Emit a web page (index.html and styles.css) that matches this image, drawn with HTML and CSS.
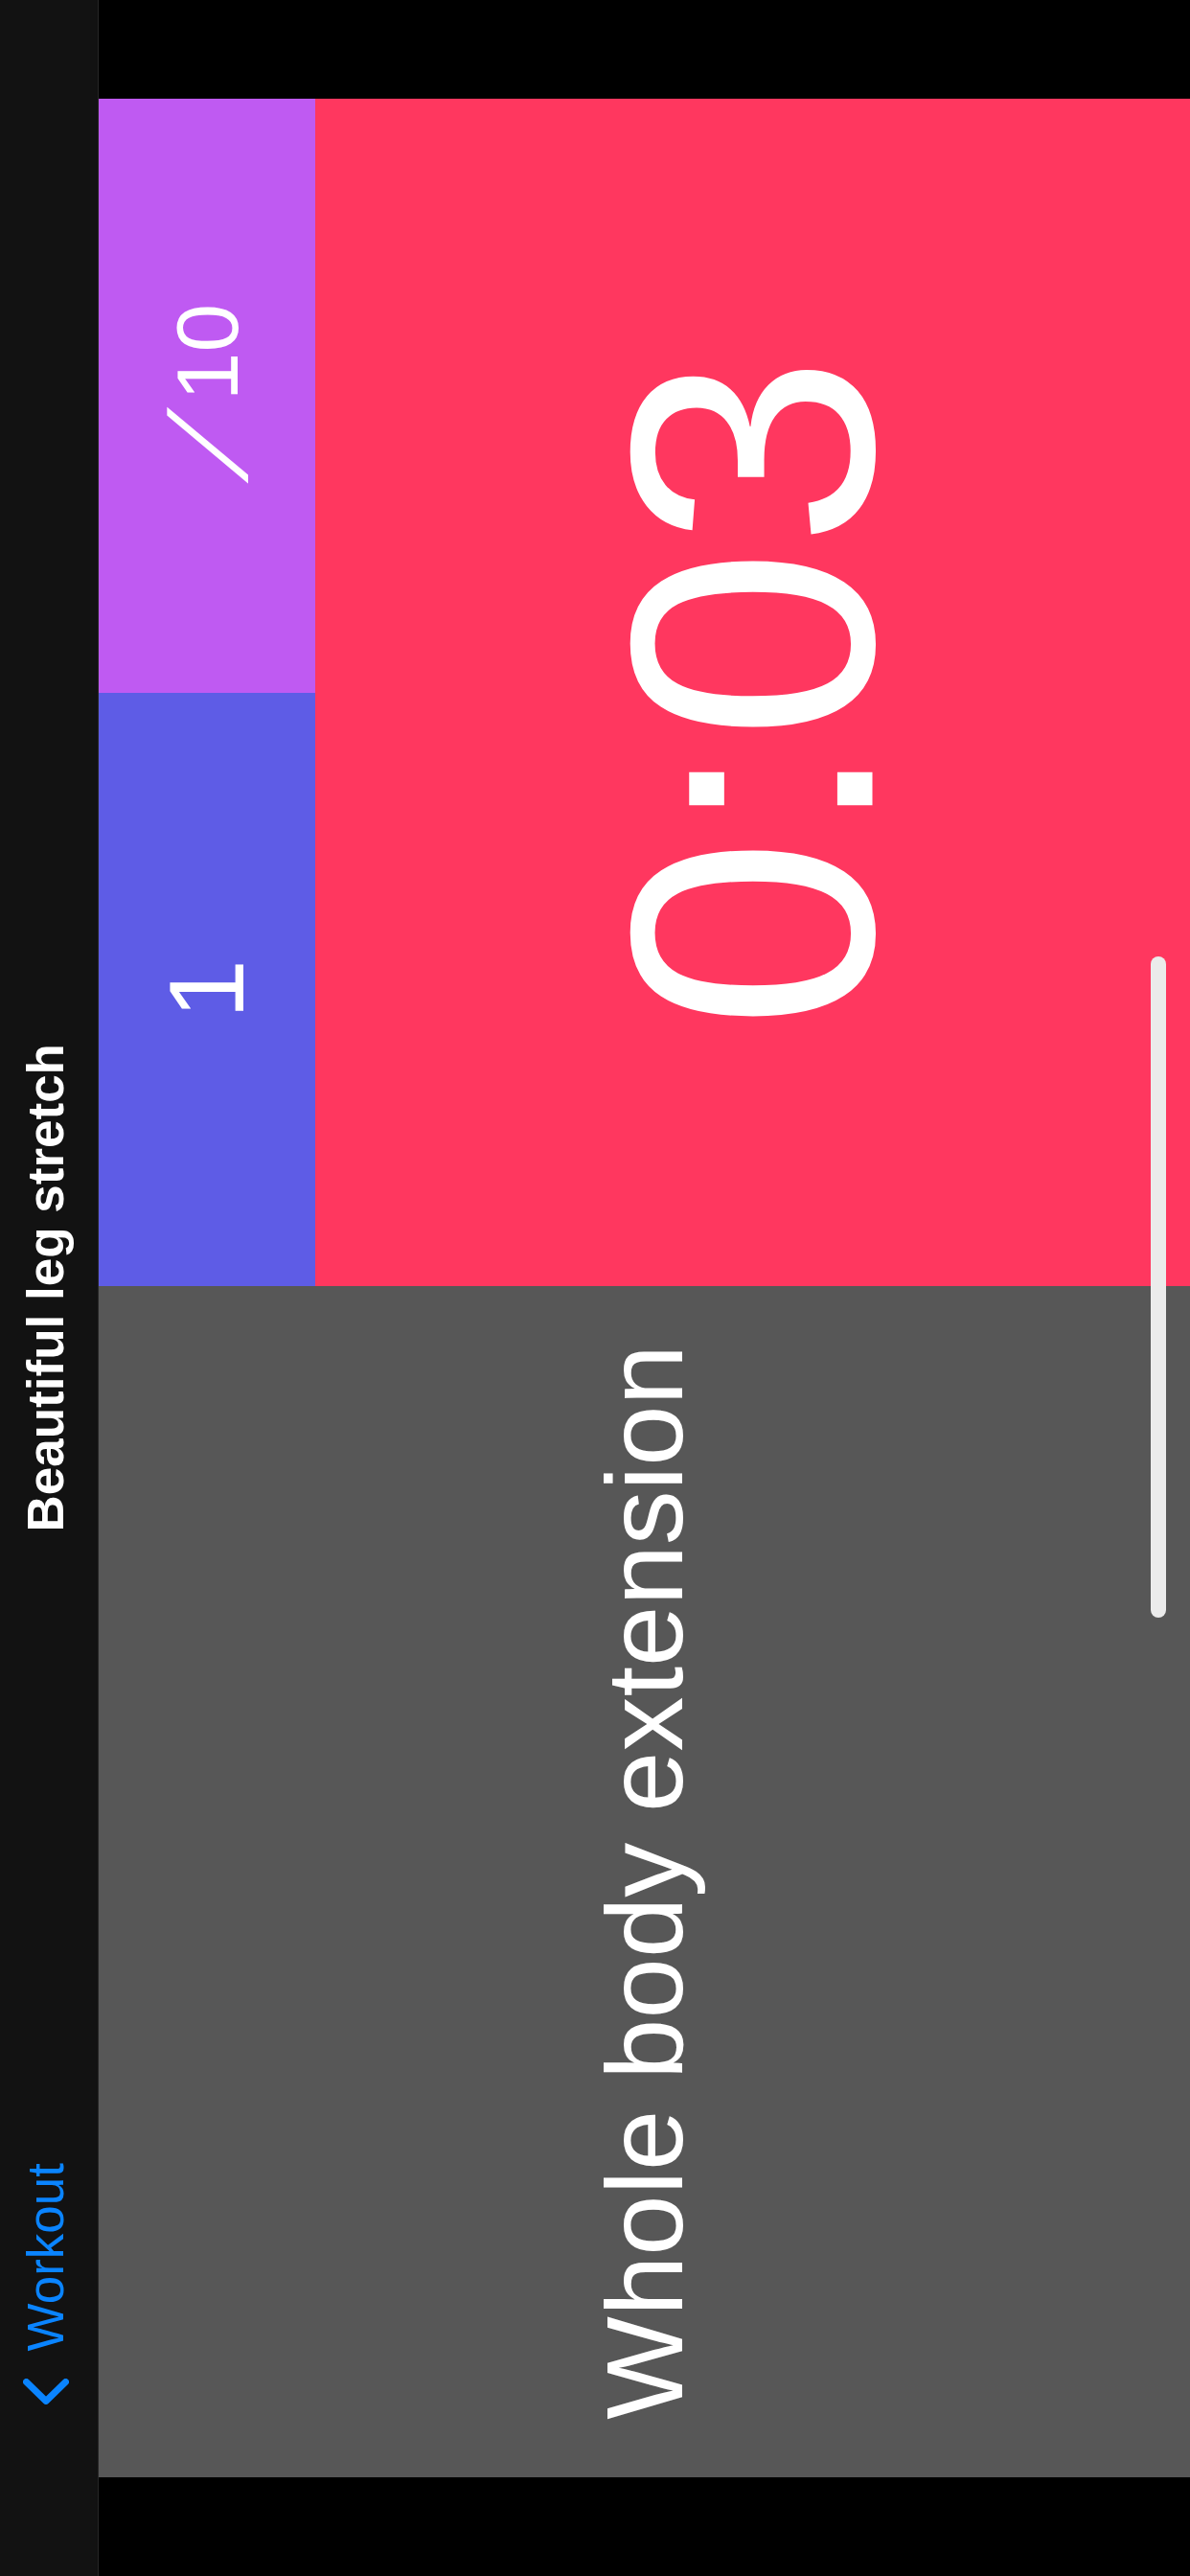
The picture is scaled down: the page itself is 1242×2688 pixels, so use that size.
FILE: index.html
```html
<!DOCTYPE html>
<html lang="en">
<head>
<meta charset="utf-8">
<title>Beautiful leg stretch</title>
<link rel="stylesheet" href="styles.css">
</head>
<body>
<div class="device">
  <header class="navbar">
    <a class="back" href="#">
      <svg class="chevron" width="48" height="27" viewBox="0 0 48 27" aria-hidden="true">
        <polyline points="3.5,3.5 24,23.5 44.5,3.5" fill="none" stroke="#0A84FF" stroke-width="7" stroke-linecap="round" stroke-linejoin="round"/>
      </svg>
      <span class="back-label">Workout</span>
    </a>
    <h1 class="title">Beautiful leg stretch</h1>
    <div class="nav-spacer"></div>
  </header>
  <main class="content">
    <section class="exercise">
      <span class="exercise-name">Whole body extension</span>
    </section>
    <section class="stats">
      <div class="counters">
        <div class="count count-current"><span>1</span></div>
        <div class="count count-total"><span class="slash">⁄</span><span>10</span></div>
      </div>
      <div class="timer"><span>0:03</span></div>
    </section>
    <div class="scroll-indicator"></div>
  </main>
</div>
</body>
</html>
```

FILE: styles.css
```css
html, body {
  margin: 0;
  padding: 0;
  width: 1242px;
  height: 2688px;
  overflow: hidden;
  background: #000;
}

/* Landscape app shown on a portrait canvas: lines run bottom-to-top */
.device {
  writing-mode: sideways-lr;
  width: 1242px;
  height: 2688px;
  background: #000;
  display: flex;
  flex-direction: column;
  font-family: "Liberation Sans", Arial, sans-serif;
  color: #fff;
  white-space: nowrap;
}

.navbar {
  flex: none;
  block-size: 103px;
  box-sizing: border-box;
  padding-block-end: 7px;
  border-block-end: 1px solid #262626;
  background: #121212;
  display: grid;
  grid-template-columns: 1fr auto 1fr;
  align-items: center;
}

.back {
  display: flex;
  align-items: center;
  gap: 29px;
  margin-inline-start: 179px;
  color: #0A84FF;
  text-decoration: none;
  font-size: 53px;
  line-height: 1;
}

.chevron {
  display: block;
  flex: none;
}

.title {
  margin: 0;
  font-size: 53px;
  font-weight: 700;
  line-height: 1;
  color: #fff;
}

.content {
  flex: 1;
  display: flex;
  margin-inline: 103px;
  position: relative;
}

.exercise {
  inline-size: 1243px;
  flex: none;
  background: #575757;
  display: flex;
  align-items: center;
  justify-content: center;
  font-size: 114px;
  line-height: 1;
}

.stats {
  flex: 1;
  display: flex;
  flex-direction: column;
}

.counters {
  block-size: 226px;
  flex: none;
  display: grid;
  grid-template-columns: 1fr 1fr;
}

.count {
  display: flex;
  align-items: center;
  justify-content: center;
  line-height: 1;
}

.count-current {
  background: #5E5CE6;
  font-size: 112px;
}

.count-total {
  background: #BF5AF2;
  font-size: 91px;
  padding-inline-start: 38px;
}

.slash {
  display: inline-block;
  font-size: 123px;
  margin-inline-end: 31px;
  transform: skewY(12deg);
}

.timer {
  flex: 1;
  background: #FF375F;
  display: flex;
  align-items: center;
  justify-content: center;
  font-size: 362px;
  line-height: 1;
}

.scroll-indicator {
  position: absolute;
  inset-inline-start: 897px;
  inset-block-start: 1098px;
  inline-size: 690px;
  block-size: 16px;
  border-radius: 8px;
  background: #EBEBEB;
}
```
